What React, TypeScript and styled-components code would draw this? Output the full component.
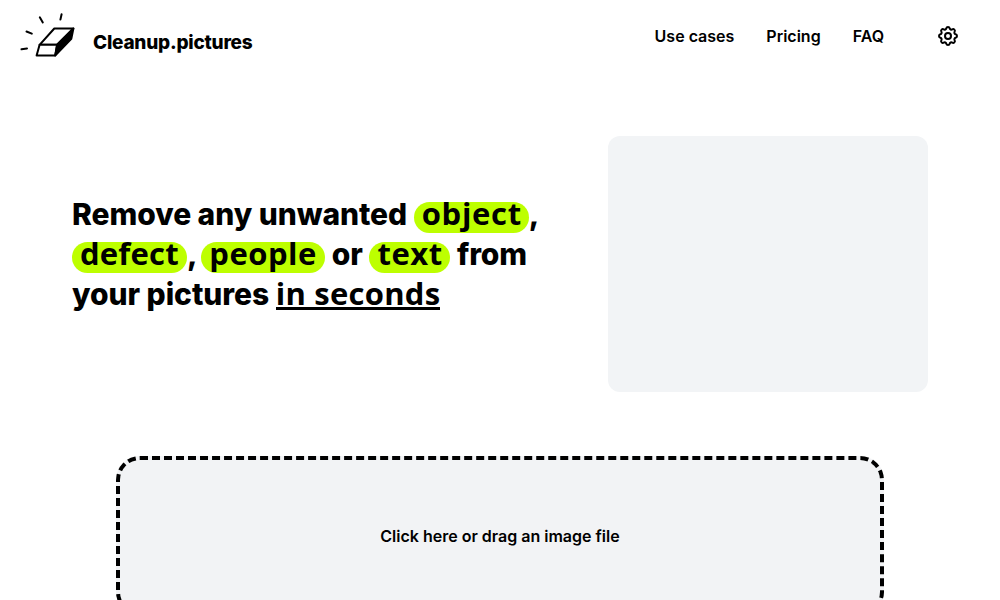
import React from 'react';
import styled, { createGlobalStyle } from 'styled-components';

const GlobalStyle = createGlobalStyle`
  *, *::before, *::after { box-sizing: border-box; }
  body {
    margin: 0;
    background: #fff;
    color: #000;
    font-family: Inter, "Liberation Sans", sans-serif;
    overflow: hidden;
  }
`;

const Page = styled.div`
  height: 600px;
  overflow: hidden;
  display: flex;
  flex-direction: column;
`;

const Header = styled.header`
  height: 72px;
  flex: none;
  display: flex;
  justify-content: space-between;
  align-items: flex-start;
  padding: 12px 40px 0 20px;
`;

const Brand = styled.a`
  display: flex;
  gap: 17px;
`;

const BrandName = styled.span`
  margin-top: 17px;
  font-size: 19px;
  line-height: 28px;
  font-weight: 800;
  letter-spacing: -0.23px;
`;

const Nav = styled.nav`
  display: flex;
  align-items: center;
  gap: 32px;
  height: 48px;
  font-size: 16px;
  font-weight: 600;
`;

const SettingsButton = styled.button`
  display: flex;
  padding: 0;
  margin: 0 0 0 20px;
  border: 0;
  background: none;
  color: inherit;
`;

const Hero = styled.section`
  flex: none;
  display: flex;
  align-items: center;
  justify-content: space-between;
  height: 256px;
  margin: 64px 72px;
`;

const Title = styled.h1`
  margin: 0 0 20px;
  font-size: 30px;
  line-height: 40px;
  font-weight: 800;
  letter-spacing: -0.05px;
  white-space: nowrap;
`;

const displayFace = `
  font-family: "Open Sans", "Noto Sans", sans-serif;
  font-size: 31px;
  font-weight: 700;
`;

const Highlight = styled.span<{ $width: number; $spacing: number; $shift?: number }>`
  ${displayFace}
  display: inline-block;
  width: ${(p) => p.$width}px;
  height: 31px;
  margin-left: ${(p) => p.$shift ?? 0}px;
  padding-left: 8px;
  border-radius: 16px;
  background: #bdff00;
  line-height: 22px;
  letter-spacing: ${(p) => p.$spacing}px;
`;

const TitleLine = styled.span`
  display: block;
  height: 40px;
`;

const Underlined = styled.span`
  ${displayFace}
  display: inline-block;
  width: 164px;
  height: 29px;
  line-height: 24px;
  letter-spacing: 0.25px;
  border-bottom: 3px solid #000;
`;

const Preview = styled.div`
  width: 320px;
  height: 256px;
  border-radius: 12px;
  background: #f2f4f6;
`;

const DropZone = styled.div`
  flex: none;
  display: flex;
  align-items: center;
  justify-content: center;
  height: 160px;
  margin: 0 116px;
  border: 4px dashed #000;
  border-radius: 24px;
  background: #f2f3f5;
  font-size: 16px;
  font-weight: 600;
`;

const EraserLogo = () => (
  <svg width="56" height="48" viewBox="0 0 56 48" fill="none" stroke="#000" strokeWidth="2" strokeLinejoin="round">
    <path d="M34.3 16.5H53.4L37.1 32.8H19.6Z" fill="#fff" />
    <path d="M19.6 32.8H37.1L35.2 43.6H16.6Z" fill="#fff" />
    <path d="M53.4 16.5L37.1 32.8L35.2 43.6L51.3 26.8Z" fill="#000" />
    <path d="M1.5 37.3L7 36.5M6.5 19.5L11.8 21.6M19.8 5.3L22.8 10.4M41.6 2.3L40.4 7.6" strokeLinecap="round" />
  </svg>
);

const CogIcon = () => (
  <svg width="24" height="24" viewBox="0 0 24 24" fill="none" stroke="currentColor" strokeWidth="2" strokeLinecap="round" strokeLinejoin="round">
    <path d="M10.325 4.317c.426-1.756 2.924-1.756 3.35 0a1.724 1.724 0 002.573 1.066c1.543-.94 3.31.826 2.37 2.37a1.724 1.724 0 001.065 2.572c1.756.426 1.756 2.924 0 3.35a1.724 1.724 0 00-1.066 2.573c.94 1.543-.826 3.31-2.37 2.37a1.724 1.724 0 00-2.572 1.065c-.426 1.756-2.924 1.756-3.35 0a1.724 1.724 0 00-2.573-1.066c-1.543.94-3.31-.826-2.37-2.37a1.724 1.724 0 00-1.065-2.572c-1.756-.426-1.756-2.924 0-3.35a1.724 1.724 0 001.066-2.573c-.94-1.543.826-3.31 2.37-2.37.996.608 2.296.07 2.572-1.065z" />
    <path d="M15 12a3 3 0 11-6 0 3 3 0 016 0z" />
  </svg>
);

export default function App() {
  return (
    <Page>
      <GlobalStyle />
      <Header>
        <Brand>
          <EraserLogo />
          <BrandName>Cleanup.pictures</BrandName>
        </Brand>
        <Nav>
          <span>Use cases</span>
          <span>Pricing</span>
          <span>FAQ</span>
          <SettingsButton aria-label="Settings">
            <CogIcon />
          </SettingsButton>
        </Nav>
      </Header>
      <Hero>
        <Title>
          <TitleLine>
            Remove any unwanted <Highlight $width={115} $spacing={0.7}>object</Highlight>,
          </TitleLine>
          <TitleLine>
            <Highlight $width={115} $spacing={0.2}>defect</Highlight>,{' '}
            <Highlight $width={124} $spacing={0.5} $shift={-1.5}>people</Highlight> or{' '}
            <Highlight $width={81} $spacing={0.6}>text</Highlight> from
          </TitleLine>
          <TitleLine>
            your pictures <Underlined>in seconds</Underlined>
          </TitleLine>
        </Title>
        <Preview />
      </Hero>
      <DropZone>Click here or drag an image file</DropZone>
    </Page>
  );
}
